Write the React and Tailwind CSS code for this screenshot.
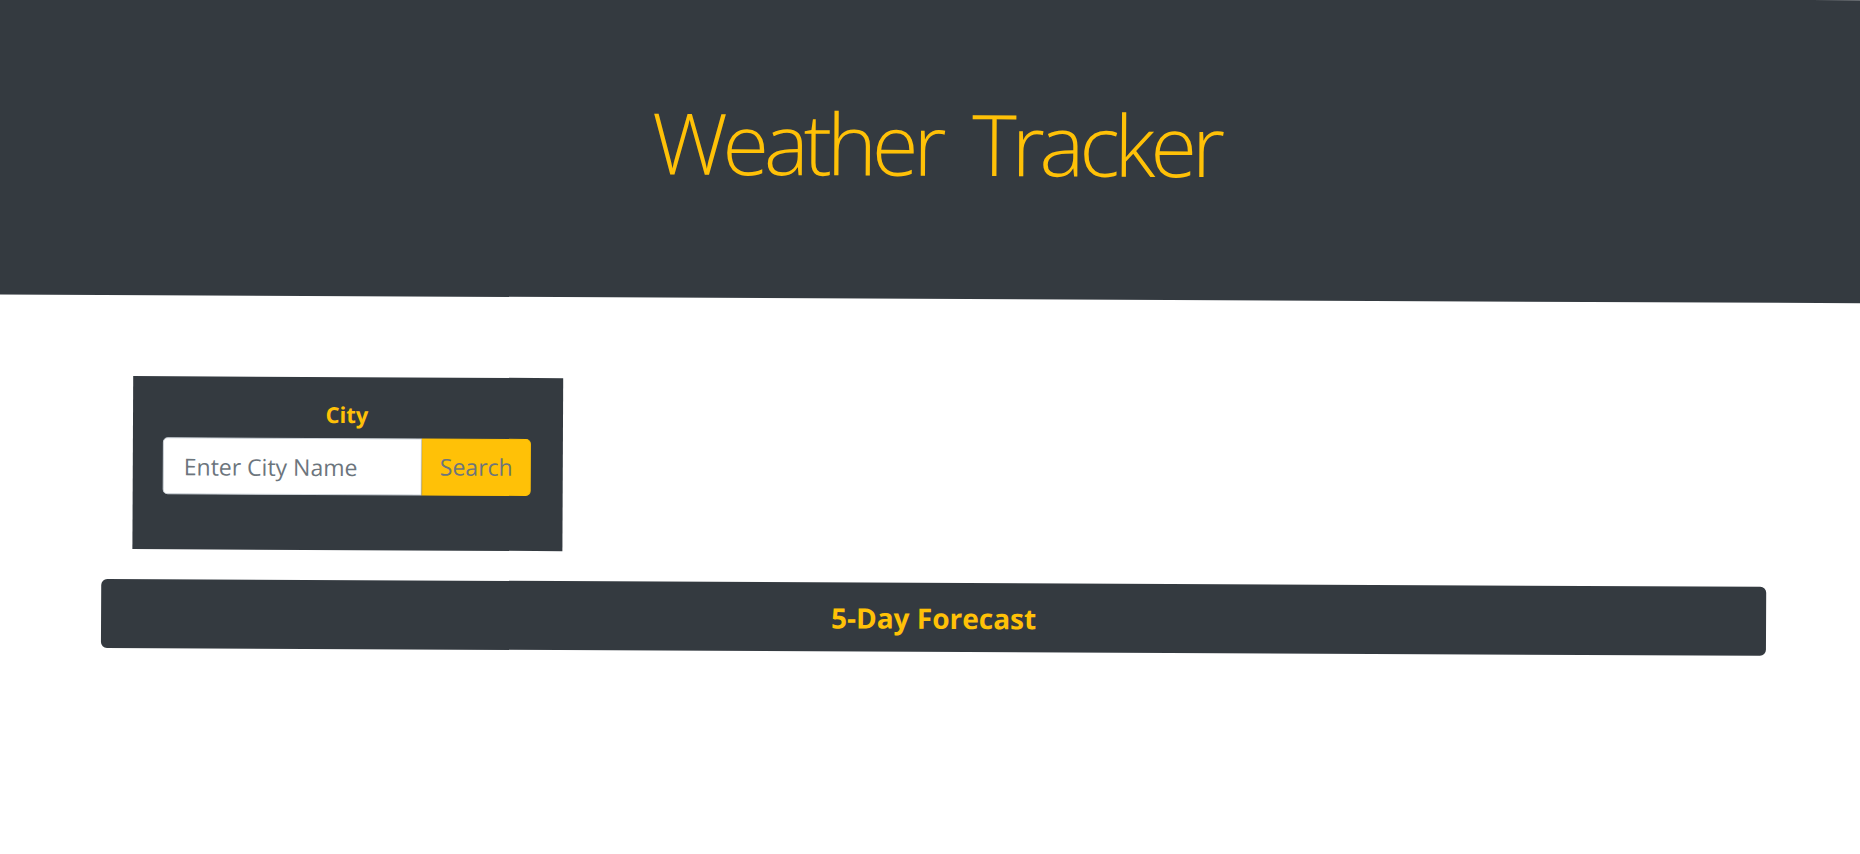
export default function App() {
  return (
    <div className="w-full h-[854px] overflow-hidden bg-white">
      <div className="w-[1873px] h-[900px] origin-[1810px_0px] rotate-[0.27deg] font-['Open_Sans','Noto_Sans',sans-serif]">
        <header className="h-[303px] bg-[#343a40] flex items-center justify-center pb-[9px]">
          <h1 className="text-[85px] font-light text-[#ffc107] leading-none tracking-[-5.2px] [word-spacing:14px]">Weather Tracker</h1>
        </header>
        <div className="ml-[135px] mt-[81px] w-[430px] h-[173px] bg-[#343a40] pt-[26px] pl-[30px] pr-[32px]">
          <h5 className="text-center font-bold text-[22px] leading-[22px] text-[#ffc107]">City</h5>
          <div className="flex mt-[13px]">
            <input
              type="text"
              placeholder="Enter City Name"
              className="w-[259px] h-[57px] bg-white border border-[#ced4da] rounded-l-[5px] px-[20px] text-[23px] text-[#495057] placeholder:text-[#6c757d] outline-none"
            />
            <button className="w-[109px] h-[57px] bg-[#ffc107] border border-[#ffc107] rounded-r-[5px] text-[23px] text-[#6c757d]">
              Search
            </button>
          </div>
        </div>
        <div className="mx-[104px] mt-[30px] h-[69px] rounded-[6px] bg-[#343a40] flex items-center justify-center">
          <h4 className="text-[28px] font-bold leading-none text-[#ffc107]">5-Day Forecast</h4>
        </div>
      </div>
    </div>
  );
}
